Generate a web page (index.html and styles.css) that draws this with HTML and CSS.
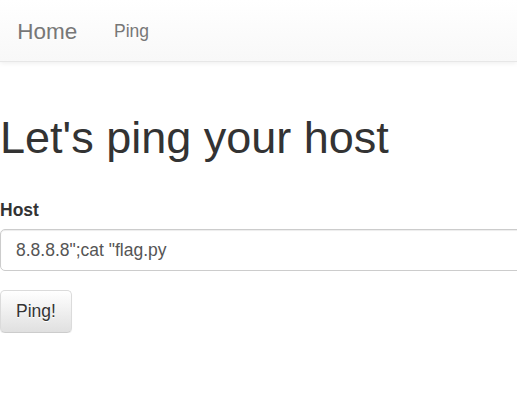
FILE: index.html
```html
<!DOCTYPE html>
<html>
<head>
<meta charset="utf-8">
<link rel="stylesheet" href="styles.css">
</head>
<body>
<nav class="navbar">
  <a class="brand" href="#">Home</a>
  <ul class="nav">
    <li><a href="#">Ping</a></li>
  </ul>
</nav>
<main class="content">
  <h1 class="title">Let's ping your host</h1>
  <form class="form">
    <div class="form-group">
      <label class="label" for="host">Host</label>
      <input class="input" id="host" type="text" value="8.8.8.8&quot;;cat &quot;flag.py">
    </div>
    <button class="btn" type="button">Ping!</button>
  </form>
</main>
</body>
</html>
```
FILE: styles.css
```css
html, body {
  margin: 0;
  padding: 0;
  overflow: hidden;
  background: #fff;
}
body {
  font-family: "Liberation Sans", Arial, sans-serif;
  font-size: 17.5px;
  line-height: 1.42857;
  color: #333;
}
.navbar {
  display: flex;
  align-items: flex-start;
  height: 61.25px;
  border-bottom: 1.25px solid #e7e7e7;
  background: linear-gradient(to bottom, #ffffff 0%, #f8f8f8 100%);
  box-shadow: inset 0 1px 0 rgba(255,255,255,.15), 0 1px 5px rgba(0,0,0,.075);
  margin-bottom: 25px;
}
.brand {
  display: block;
  padding: 18.75px 18.75px 18.75px 17.25px;
  font-size: 22.5px;
  line-height: 25px;
  color: #777;
  text-decoration: none;
  text-shadow: 0 1px 0 rgba(255,255,255,.25);
}
.nav {
  list-style: none;
  margin: 0;
  padding: 0;
  display: flex;
}
.nav a {
  display: block;
  padding: 18.75px 18.75px 18.75px 18px;
  line-height: 25px;
  font-size: 17.5px;
  color: #777;
  text-decoration: none;
}
.content {
  display: flow-root;
  padding: 0;
}
.title {
  margin: 26px 0 35px;
  font-size: 45px;
  font-weight: 500;
  line-height: 1.1;
  color: #333;
}
.form-group {
  margin-bottom: 18.75px;
}
.label {
  display: inline-block;
  margin-bottom: 6.25px;
  font-weight: bold;
}
.input {
  display: block;
  box-sizing: border-box;
  width: calc(100% + 40px);
  height: 42.5px;
  padding: 7.5px 15px;
  font-family: inherit;
  font-size: 17.5px;
  line-height: 1.42857;
  color: #555;
  background: #fff;
  border: 1.25px solid #ccc;
  border-radius: 5px;
  box-shadow: inset 0 1px 1px rgba(0,0,0,.075);
  outline: none;
}
.btn {
  display: inline-block;
  box-sizing: border-box;
  height: 42.5px;
  padding: 7.5px 15px;
  font-family: inherit;
  font-size: 17.5px;
  line-height: 1.42857;
  color: #333;
  background: linear-gradient(to bottom, #ffffff 0%, #e0e0e0 100%);
  border: 1.25px solid #ccc;
  border-color: #dbdbdb #dbdbdb #ccc;
  border-radius: 5px;
  box-shadow: inset 0 1px 0 rgba(255,255,255,.15), 0 1px 1px rgba(0,0,0,.075);
  text-shadow: 0 1px 0 #fff;
  cursor: pointer;
}
```
